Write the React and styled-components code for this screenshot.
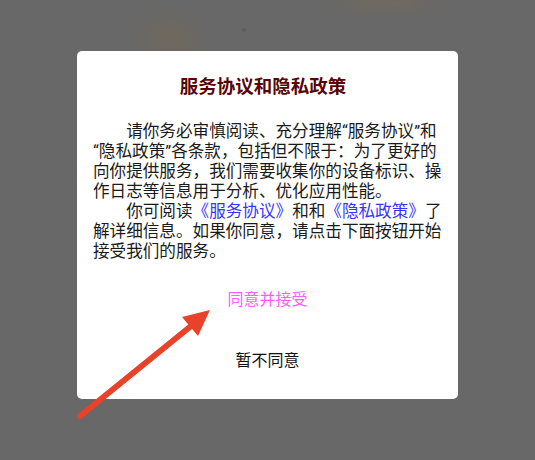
import React from 'react'
import styled, { createGlobalStyle } from 'styled-components'

const GlobalStyle = createGlobalStyle`
    html, body {
        margin: 0;
        padding: 0;
    }
    body {
        font-family: Roboto, "Noto Sans CJK SC", sans-serif;
    }
`

const Page = styled.div`
    position: relative;
    width: 535px;
    height: 460px;
    overflow: hidden;
    box-sizing: border-box;
    padding-top: 51px;
    display: flex;
    justify-content: center;
    align-items: flex-start;
    background-color: #686868;
    background-image:
        radial-gradient(ellipse 40px 30px at 170px 38px, rgba(120, 104, 80, 0.5), rgba(120, 104, 80, 0) 100%),
        radial-gradient(ellipse 60px 14px at 385px 4px, rgba(120, 108, 88, 0.5), rgba(120, 108, 88, 0) 100%),
        radial-gradient(circle 3px at 244px 30px, rgba(80, 80, 80, 0.6), rgba(80, 80, 80, 0) 100%);
`

const Dialog = styled.div`
    width: 381px;
    height: 348px;
    box-sizing: border-box;
    padding: 24px 10px 10px 16px;
    background: #fff;
    border-radius: 5px;
    display: flex;
    flex-direction: column;
`

const Title = styled.h2`
    margin: 0 15px 0 0;
    text-align: center;
    font-size: 18.5px;
    line-height: 24px;
    font-weight: 700;
    color: #5a0505;
`

const Body = styled.div`
    margin-top: 23px;
    font-size: 16.6px;
    line-height: 20px;
    color: #1a1a1a;
`

const Para = styled.p`
    margin: 0;
    text-indent: 2em;
    white-space: nowrap;
`

const Link = styled.span`
    color: #3535ff;
`

const ActionButton = styled.button`
    display: block;
    width: 100%;
    height: 61px;
    padding: 0 6px 0 0;
    border: none;
    background: transparent;
    font-family: inherit;
    font-size: 16px;
    color: ${({ $primary }) => $primary ? '#ff5cff' : '#111'};
    cursor: pointer;
`

const Actions = styled.div`
    margin-top: 5px;
    display: flex;
    flex-direction: column;
`

const ArrowOverlay = styled.svg`
    position: absolute;
    left: 0;
    top: 0;
    pointer-events: none;
`

const Arrow = () => (
    <ArrowOverlay width="535" height="460" viewBox="0 0 535 460">
        <line x1="80" y1="416" x2="196" y2="322" stroke="#e8432a" strokeWidth="6" strokeLinecap="round" />
        <polygon points="210,310 182,317 198,336" fill="#e8432a" />
    </ArrowOverlay>
)

export default function App() {
    return (
        <>
            <GlobalStyle />
            <Page>
                <Dialog>
                    <Title>服务协议和隐私政策</Title>
                    <Body>
                        <Para>
                            请你务必审慎阅读、充分理解“服务协议”和<br />
                            “隐私政策”各条款，包括但不限于：为了更好的<br />
                            向你提供服务，我们需要收集你的设备标识、操<br />
                            作日志等信息用于分析、优化应用性能。
                        </Para>
                        <Para>
                            你可阅读<Link>《服务协议》</Link>和和<Link>《隐私政策》</Link>了<br />
                            解详细信息。如果你同意，请点击下面按钮开始<br />
                            接受我们的服务。
                        </Para>
                    </Body>
                    <Actions>
                        <ActionButton $primary>同意并接受</ActionButton>
                        <ActionButton>暂不同意</ActionButton>
                    </Actions>
                </Dialog>
                <Arrow />
            </Page>
        </>
    )
}
